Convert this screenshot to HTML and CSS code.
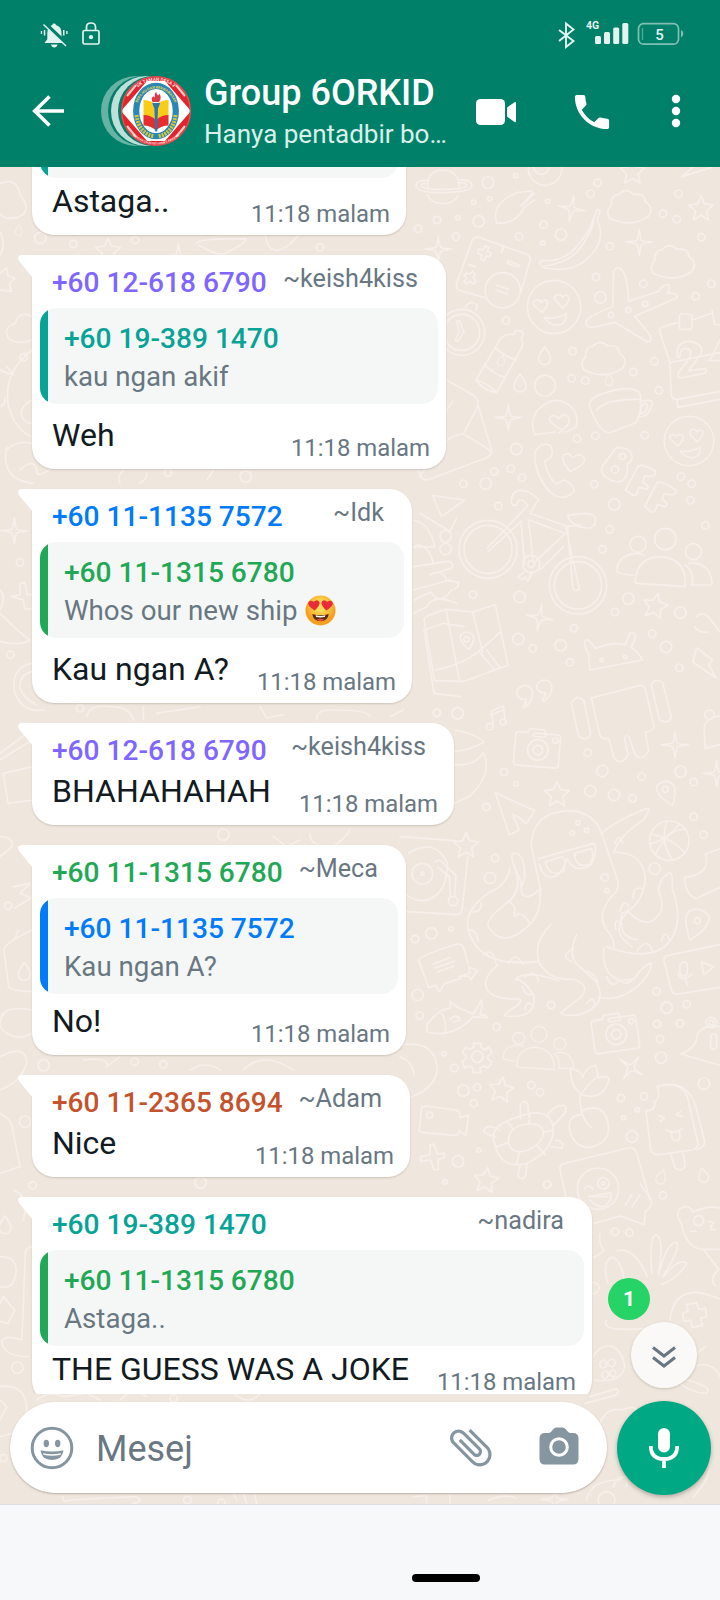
FILE: index.html
```html
<!DOCTYPE html>
<html lang="ms">
<head>
<meta charset="utf-8">
<title>Group 6ORKID</title>
<link rel="stylesheet" href="styles.css">
</head>
<body>
<div class="screen">
  <header class="header">
    <div class="status">
      <svg class="status-left" viewBox="36 16 70 34" width="70" height="34">
        <g fill="#e4f3f0">
          <path d="M54 23.500q1.500 0 2 1.400q5.500 1.700 5.500 8v6.500l2.500 3.500H44.500l2.800-3.700v-6.300q0-6.300 5-8q.4-1.400 1.700-1.400z"/>
          <path d="M51 44.500h6.600q-.8 3-3.300 3t-3.300-3z"/>
          <path d="M40.800 31h1.300v3h-1.300zM43.800 30h1.500v5.500h-1.500zM63 30h1.500v5.500H63zM66.200 31h1.400v3h-1.400z"/>
        </g>
        <path d="M44 22.500l24 23" stroke="#008069" stroke-width="4"/>
        <path d="M43.500 24.500l22.500 21.500" stroke="#e4f3f0" stroke-width="1.500"/>
        <g fill="none" stroke="#e4f3f0" stroke-width="1.700"><rect x="83" y="30.500" width="16" height="13.500" rx="1.500"/><path d="M86.500 30v-3q0-4 4.500-4t4.500 4v3"/></g>
        <circle cx="91" cy="37.200" r="2.100" fill="#e4f3f0"/>
      </svg>
      <svg class="status-right" viewBox="554 16 134 34" width="134" height="34">
        <path d="M559 30l14.500 11l-7.500 6V23.500l7.500 6L559 41" fill="none" stroke="#e4f3f0" stroke-width="1.900"/>
        <text x="586" y="29" class="net">4G</text>
        <g fill="#e4f3f0"><rect x="595" y="36" width="6" height="8" rx="1.500"/><rect x="604" y="32" width="6" height="12" rx="1.500"/><rect x="613.200" y="27.500" width="6" height="16.500" rx="1.500"/><rect x="622.300" y="23" width="6" height="21" rx="1.500"/></g>
        <rect x="638.500" y="23.700" width="40" height="20.500" rx="5" fill="none" stroke="#80c0b4" stroke-width="1.700"/>
        <path d="M642.500 28v12" stroke="#55a895" stroke-width="1.300"/>
        <path d="M681 30q2.300 1 2.300 3.600T681 37.400z" fill="#80c0b4"/>
        <text x="655.300" y="40.300" class="bat">5</text>
      </svg>
    </div>
    <div class="bar">
      <svg class="back" viewBox="30 90 38 42" width="38" height="42"><path d="M64 111H35M49.500 96.500L34.700 111l14.800 14.500" fill="none" stroke="#fff" stroke-width="3.600"/></svg>
      <svg class="avatar" viewBox="99 74 94 74" width="94" height="74">
        <defs>
          <clipPath id="face"><circle cx="156" cy="111" r="35"/></clipPath>
          <path id="arc-top" d="M126 111a30 30 0 0 1 60 0"/>
          <path id="arc-bot" d="M122.500 111a33.500 33.500 0 0 0 67 0"/>
          <path id="arc-in" d="M135.700 113a20.300 24.500 0 0 1 40.600 0"/>
        </defs>
        <circle cx="136" cy="111" r="35" fill="#66b3a5"/><circle cx="143" cy="111" r="35" fill="#008069"/>
        <circle cx="146" cy="111" r="35" fill="#bfdfda"/><circle cx="153" cy="111" r="35" fill="#008069"/>
        <g clip-path="url(#face)">
          <circle cx="156" cy="111" r="35" fill="#e4242c"/>
          <path d="M121 111l14-16l12-14h18l12 14l14 16l-14 16l-12 14h-18l-12-14z" fill="#fff"/>
          <path d="M127 96l9-11M185 96l-9-11M127 126l9 11M185 126l-9 11" stroke="#f4c9c6" stroke-width="2.200"/>
        </g>
        <circle cx="156" cy="111" r="34.300" fill="none" stroke="#e05052" stroke-width="1.400"/>
        <ellipse cx="156" cy="111" rx="19.800" ry="25.200" fill="#fff" stroke="#2a87b3" stroke-width="6.200"/>
        <path d="M136.500 115q2 18 17.500 21.500M175.500 115q-2 18-17.500 21.500" fill="none" stroke="#d4c63d" stroke-width="4" stroke-dasharray="2 1"/>
        <path d="M143.500 100q7 0 12.500 5q5.500-5 12.500-5v16q-7 0-12.500 5q-5.500-5-12.500-5z" fill="#f8cc17"/>
        <path d="M143.500 115q7 0 12.500 5q5.500-5 12.500-5V125.500q-7 0-12.500 5q-5.500-5-12.500-5z" fill="#e52e2d"/>
        <path d="M152.200 103h8l-2.200 5.500l-.8 23h-2l-.8-23z" fill="#2878b8"/>
        <path d="M152.500 102q-2-4 1-6q.2 2 1.200 1q-.5-3 1.500-5.500q0 3 2.200 4l1-2q2.700 4.500-.4 8.500z" fill="#e0394c"/>
        <text class="seal"><textPath href="#arc-top" startOffset="50%" text-anchor="middle">SK TAMAN DESA 2</textPath></text>
        <text class="seal-sm"><textPath href="#arc-bot" startOffset="50%" text-anchor="middle">BANDAR COUNTRY HOMES RAWANG</textPath></text>
        <text class="seal-in"><textPath href="#arc-in" startOffset="50%" text-anchor="middle">BERILMU DAN BERWAWASAN</textPath></text>
      </svg>
      <div class="titles">
        <div class="title">Group 6ORKID</div>
        <div class="sub">Hanya pentadbir bo…</div>
      </div>
      <svg class="actions" viewBox="470 86 220 50" width="220" height="50">
        <g fill="#fff"><rect x="476" y="99" width="29" height="26" rx="4.500"/><path d="M507 107.500l7.500-5.200q1.500-.8 1.500.8v18q0 1.600-1.500.8l-7.500-5.400z"/>
        <path transform="translate(569.200 89.200) scale(1.900)" d="M6.620 10.790c1.440 2.830 3.760 5.140 6.590 6.590l2.200-2.200c.27-.27.67-.36 1.020-.24 1.120.37 2.330.57 3.570.57.550 0 1 .45 1 1V20c0 .55-.45 1-1 1-9.390 0-17-7.610-17-17 0-.55.450-1 1-1h3.500c.55 0 1 .45 1 1 0 1.250.2 2.450.57 3.570.110.350.030.740-.25 1.020l-2.200 2.200z"/>
        <circle cx="676" cy="99" r="4.200"/><circle cx="676" cy="111" r="4.200"/><circle cx="676" cy="123" r="4.200"/></g>
      </svg>
    </div>
  </header>

  <main class="main">
    <svg class="wallpaper" viewBox="0 167 720 1337" width="720" height="1337">
      <defs>
        <circle id="s" r="6.500"/><circle id="m" r="11"/><circle id="l" r="17"/>
        <path id="star" d="M0-38l10 24l27 4l-20 18l6 27l-23-14l-23 14l6-27l-20-18l27-4z"/>
        <path id="spark" d="M0-38q4 32 8 34q4 3 32 4q-30 4-33 8q-3 3-7 32q-4-30-8-33q-3-4-32-7q28-2 33-5q3-3 7-33z"/>
        <path id="cloud" d="M-60 30q-14-22 5-40q-4-28 22-32q22-22 44 0q34-5 36 22q28 20 8 45q-50 35-115 5z"/>
        <g id="cam"><path d="M-70-35q0-10 10-10h25l5-12h45l5 12h35q10 0 10 10V45q0 10-10 10H-60q-10 0-10-10z"/><circle cy="5" r="31"/><circle cy="5" r="14"/><rect x="-18" y="-45" width="38" height="10" rx="5"/><circle cx="50" cy="-28" r="8"/></g>
        <g id="love"><circle r="80"/><path d="M-50 4q-22-18-4-24q10-4 15 6q8-12 18-4q8 10-14 34zM12-12q-20-20 0-25q10-2 14 8q8-10 18-2q6 12-18 34zM-28 32q35 6 64-12q4 30-24 34q-26 2-40-22z"/></g>
        <g id="people"><circle cy="-58" r="32"/><circle cx="-82" cy="-42" r="24"/><circle cx="84" cy="-20" r="24"/><path d="M-90 65Q-84-5-10-5q76 10 70 90l-145-10q-8-2-5-10zM-95 50q-35 0-50-10q-2-50 60-55q10 2 20 6M70 15q60-6 70 55q2 10-10 10h-50q8-40-20-60"/></g>
        <path id="drop" d="M0-28q20 28 18 38q-4 16-18 16t-18-16q-2-10 18-38z"/>
      </defs>
      <g class="doodle">
        <!-- right column, upper half -->
        <g transform="translate(400 160) scale(.33333)">
          <path d="M84 90q-8-58 46-60q48 2 48 56M82 105q10 26 50 26q35-4 42-24"/><path d="M84 62q-34-4-36 14q4 24 84 22q84-2 84-22q-4-18-38-16M84 72q-22-4-20 6q10 12 70 10q66 0 66-12q-4-12-24-6"/>
          <circle cx="435" cy="26" r="50"/><circle cx="424" cy="20" r="23"/><use href="#star" x="697" y="34"/><use href="#star" x="903" y="145"/>
          <path d="M845 50l55-46M845 50l90-28M290 190q-18-60 60-92l40-5q18 0-12 28l26-20M388 115l-24 22M404 120l-32 22q-22 50-82 48"/>
          <use href="#spark" x="515" y="145" transform="rotate(10 515 145)"/><use href="#spark" x="718" y="246"/><use href="#spark" x="115" y="267"/><use href="#spark" x="325" y="772"/><use href="#spark" x="419" y="1372" transform="rotate(10 419 1372)"/>
          <use href="#cloud" x="689" y="145"/><use href="#cloud" x="820" y="310"/><use href="#cloud" x="612" y="600"/>
          <path d="M580 178l12-30l8 2l-8 30q26 52-16 102q-50 60-140 42q-30-14-8-22q62 4 100-40q38-42 52-84M432 318q70-8 104-48q40-54 46-90"/>
          <path d="M216 242q6-14 20-10l142 50q16 6 12 20l-28 96M216 242l-46 128q-4 18 12 22l75 22M312 260l-8 18"/><path d="M236 266l12 4l8-12l10 4l-4 12l12 6l-4 10l-12-2l-6 14l-10-4l4-12l-12-6zM200 340l10 2l8-8l8 8l-6 10l8 14l-8 6l-10-8l-10 8l-8-8l8-10l-8-8zM324 302l32 12q4 6-4 6l-30-10zM206 314l20 6"/><circle cx="308" cy="391" r="53"/><path d="M290 376l35 12M288 390l35 12"/>
          <use href="#love" x="462" y="441"/><use href="#love" x="867" y="843" transform="translate(867 843) scale(.93) translate(-867 -843)"/>
          <path d="M638 440l2-80q-2-42 18-36q24 10 28 100l90-30q10-20 30-20q6 14-4 26q36-2 28 14l-126 55l46 56q8 30-16 16l-90-54l-60 14q-30 4-26-18q14-18 80-43z"/><circle cx="685" cy="450" r="8"/><circle cx="633" cy="465" r="8"/><circle cx="736" cy="432" r="8"/>
          <circle cx="185" cy="517" r="69"/><circle cx="185" cy="517" r="54"/><path d="M170 484l8-2l14 34l-18 28l-8-4l12-24zM196 442q14-24 34-8q4 8-2 16"/>
          <path d="M228 660l72-122q16-18 40-14l8-12q20-2 22 10l-6 14q10 20-4 36l-70 126q-40-6-62-38zM286 564q34 28 62 36M256 616q30 30 60 36M228 660q30 6 62 38"/><use href="#drop" x="434" y="588"/><use href="#drop" x="360" y="670"/><use href="#drop" transform="translate(627 660) scale(.65)"/><use href="#drop" transform="translate(304 602) rotate(20) scale(.6)"/>
          <path d="M778 510q-2-10 58-22M876 480l60-20M778 510l32 98l4 98q2 14 20 12l126-24M810 608l150-30M830 720l4 22l126-24"/><rect x="838" y="462" width="38" height="46" rx="8"/><path d="M936 452l8 42h16M832 590q-6-46 38-46q54 10 24 50l-28 38l50-6q6 8-2 14l-76 14q-8-10 0-20q36-42 34-56q-2-14-18-12q-14 4-14 22q-4 6-8 2zM930 600l30-60M926 602l34 0"/>
          <circle cx="435" cy="677" r="31"/><path d="M404 824q-18-54 20-84q42-36 84-4q32 26 20 66l-30 14q-62-30-46-46q14-10 24 6q14-20 28-6q14 20-26 48M404 824l62-8M568 738q0-28 50-40q72-24 100 0q16 40-10 90l-80 30q-30 0-60-80zM588 750q30-34 132-32M720 726q50-18 32 20q-10 24-36 26M720 742q24-22 22 0q-8 20-20 18"/>
          <path d="M140 660l80 46q16 10 14 30l40 130q4 20-16 28l-170 64q-18 6-24-8l-30-60M60 950q70-130 130-128q70 40 84 54M190 822l44-84M134 760l24-36"/>
          <path d="M404 880q12-32 42-26q18 14 6 38l-18 12q6 40 34 68l24-12q30 12 30 34q-32 34-70 4q-48-50-48-118zM510 934q-30-36-18-50q18-8 26 10q20-18 34-2q10 20-42 42zM606 920l44-58q44 0 46 28q0 18-14 20q6 50-28 56q-38-6-50-32zM676 990l38-70q8-12 52 14q6 20-32 14l-6 20q22 8 14 20l-26-6q-6 30-16 24zM734 1040l36-70q10-12 58 20q4 20-36 12l-6 18q22 8 10 20l-24-6q-8 30-20 20z"/><circle cx="645" cy="929" r="11"/><circle cx="667" cy="889" r="9"/>
          <path d="M98 1006l96 14l-70 50zM40 1080q50 10 64 80l-64 2"/>
          <circle cx="264" cy="1168" r="87"/><circle cx="264" cy="1168" r="72"/><circle cx="534" cy="1276" r="86"/><circle cx="534" cy="1276" r="71"/><path d="M262 1164l122-128q-28-32-34 0q-24 4-12-34q30-28 78 16l-26 42l116 40l34-6l-38 4l16 182q6 20 20 6l-42-190M506 1066q76-14 80 10q4 24-20 28q-50-2-64-38M386 1080l110 40l-96 90zM364 1094l10 120M490 1160l-70 70M264 1174l100-90"/><circle cx="394" cy="1212" r="26"/><circle cx="394" cy="1212" r="10"/><path d="M372 1236l-18 14q8 16 22 2l8 12l12-30"/>
          <use href="#people" x="796" y="1195"/>
          <path d="M40 1220l106-16q18 8 10 20l-66 20q40-20 50 18l34 4q6 20-20 24q-34 50-62 6l-50 24"/>
          <path d="M72 1378q0-10 66-30l80 8l68-22l38 182l-132 48l-88-2zM138 1348l40 212M218 1356l30 120M106 1530q90-18 140-64l54-48M260 1470l40 54M240 1478l44 52"/><path d="M206 1468q-30-24-24-42q18-20 38 0q4 22-14 42z"/><circle cx="200" cy="1438" r="8"/>
          <use href="#star" x="766" y="1337" transform="rotate(12 766 1337)"/>
          <path d="M570 1530l-4-48q-20-34-8-42q10-4 28 26q50-22 90-12l14-36q20-4 14 20l-10 24q26 20 34 38zM890 1370q20-20 40 6l30 40M884 1400q10 20 40 16M890 1464l48 36l-12 14l22 40l-70-48z"/><circle cx="605" cy="1500" r="5"/><circle cx="675" cy="1490" r="5"/>
          <use href="#m" x="168" y="230"/><use href="#l" x="236" y="184"/><use href="#l" x="264" y="68"/><use href="#m" x="111" y="180"/><use href="#s" x="269" y="116"/><use href="#s" x="221" y="127"/><use href="#s" x="173" y="173"/><use href="#m" x="54" y="206"/><use href="#m" x="431" y="194"/><use href="#l" x="483" y="224"/><use href="#m" x="357" y="230"/><use href="#s" x="428" y="249"/><use href="#s" x="443" y="124"/><use href="#m" x="593" y="68"/><use href="#m" x="572" y="101"/><use href="#s" x="347" y="47"/><use href="#m" x="836" y="101"/><use href="#m" x="789" y="161"/><use href="#m" x="830" y="178"/><use href="#m" x="904" y="232"/><use href="#m" x="630" y="259"/><use href="#m" x="588" y="351"/><use href="#l" x="601" y="412"/><use href="#m" x="730" y="371"/><use href="#m" x="887" y="409"/><use href="#m" x="934" y="371"/><use href="#m" x="318" y="482"/><use href="#m" x="518" y="573"/><use href="#m" x="556" y="662"/><use href="#m" x="515" y="655"/><use href="#m" x="700" y="636"/><use href="#m" x="763" y="604"/><use href="#m" x="777" y="691"/><use href="#l" x="349" y="867"/><use href="#m" x="531" y="836"/><use href="#m" x="586" y="827"/><use href="#m" x="734" y="826"/><use href="#m" x="283" y="935"/><use href="#m" x="332" y="926"/><use href="#l" x="257" y="971"/><use href="#m" x="190" y="971"/><use href="#m" x="366" y="953"/><use href="#m" x="583" y="973"/><use href="#l" x="643" y="1033"/><use href="#m" x="871" y="1021"/><use href="#m" x="875" y="971"/><use href="#m" x="843" y="950"/><use href="#m" x="295" y="1038"/><use href="#l" x="137" y="1129"/><use href="#m" x="629" y="1108"/><use href="#m" x="607" y="1168"/><use href="#m" x="916" y="1096"/><use href="#m" x="219" y="1304"/><use href="#l" x="359" y="1311"/><use href="#l" x="685" y="1316"/><use href="#m" x="645" y="1356"/><use href="#l" x="841" y="1358"/><use href="#m" x="522" y="1405"/><use href="#l" x="355" y="1437"/><use href="#l" x="482" y="1456"/><use href="#m" x="757" y="1421"/><use href="#l" x="798" y="1461"/><use href="#m" x="838" y="1523"/><use href="#m" x="510" y="1507"/><use href="#m" x="398" y="1465"/>
        </g>
        <!-- right column, lower half -->
        <g transform="translate(400 680) scale(.33333)">
          <path d="M372 84q24-16 26-44q-2-24-26-24q-22 6-22 24q4 20 28 18q2 12-10 20zM430 64q26-16 26-44q-4-20-26-20q-20 6-20 22q4 18 26 16q2 12-10 20z"/>
          <path d="M280 134l-6-40l36-16l6 46M272 104l38-14"/><circle cx="269" cy="140" r="10"/><circle cx="309" cy="126" r="9"/><use href="#cam" x="414" y="205" transform="rotate(5 414 205)"/><use href="#cam" x="648" y="1058" transform="rotate(-8 648 1058)"/>
          <path d="M574 54l146-38q14 0 16 12l26 110q-2 14-26 20l10 54q-20 36-42 10l-16-50q-12-12-14 6l10 46q-20 36-42 10l-16-60q-20 6-26-8zM514 70q16-30 38-8l20 100q-12 26-36 6zM754 14q10-22 34-6l26 104q-10 24-36 6z"/>
          <use href="#spark" x="825" y="194"/><use href="#spark" x="950" y="280"/><use href="#spark" x="694" y="1162" transform="rotate(35 694 1162)"/><path d="M916 206l-4-60q4-34 48-38M916 206l44-12"/><circle cx="928" cy="104" r="14"/>
          <path d="M164 150q62 10 88 36q-40 24-88 28M162 254q62 6 88-36q30 60-40 130l-48 22M286 338l118 54l-26 40q-16-20-40-30l20 48l-30 14z"/>
          <use href="#star" x="471" y="342"/><use href="#star" x="198" y="496"/><use href="#star" x="304" y="1228" transform="rotate(8 304 1228)"/><use href="#star" x="258" y="1500" transform="rotate(8 258 1500)"/>
          <path d="M422 630L394 500q0-106 118-108q74 6 94 72l48 140q4 30-20 46q-50 60-6 110q14 20 14 40M416 536l164-46q12 0 2 46q-8 34-54 28q-24-14-26-28q-16 40-30 50q-40 20-54-34M436 546l50-16q14 6 6 44q-44 20-56-28zM524 520l50-14q10 20-4 46q-44 16-46-32z"/>
          <path d="M418 630q-60 50-54-24q-40-80-24-86q32-4 34 60q0 30-12 40M346 570q20 50-14 90q-80 60-66 82q40 60 104 8q58-40 50-120M330 566q-10 50-60 70q-90 60-60 130q40 100 206 78M604 462q40-40 140-78q10 0-12 34q-76 50-90 98q90 0 94 84q-10 80-70 100q-10 30 6 60q20 20 40 18M684 694q60 60 92 10q20-20 0-70q0-40 34-56q10 4 6 46q34 90 0 150q-50 80-196 26M684 694q-60 60 12 106"/>
          <path d="M454 732q-60 60-34 120q30 50 100 46q50 16 26 50q-30 26-64 50q10 12 56 6q90-30 50-100l-56-50q-30-30-2-90M294 854q-70 60-10 94q50 14 74 8q10 10-14 26q-40 24-26 26q90 10 84-60q-30-50-56-50q30-30 130 4M612 802q-10 80 50 100l40-4q20-36 52-50q0 28-30 60q-60 60-128 44"/>
          <path d="M218 696q26 2 26-28M206 748q26 2 28 34M250 824q30-24 38 26M326 850q20-40 44 4M322 664q30 10 20 40M344 710q20-24 44 18M644 490q16-36 24 0M700 656q-4-40 30-30M660 694q10-40 26-16M648 750q-10-40 18-20M712 812q30-44 46 2M784 782q14-40 24 0M516 846q-40-20 4-40M554 876q20-10 40 30M376 890q30-24 40 14M368 920q10 34 30 20M376 990q0-30 20-16M560 970q20-24 24 0M620 890q16 40 38 10q20 20 40-2"/>
          <circle cx="808" cy="482" r="59"/><path d="M752 462q60 10 100 54M766 524q40-80 90-76M800 424q-20 70 18 116M750 492q50-10 86-58"/>
          <path d="M0 470l166 12M204 530l-18 160q-4 14-14 14l-156-10M26 520q80-50 116 30q0 100-70 112q-30 0-52-16"/><circle cx="67" cy="581" r="31"/><circle cx="67" cy="581" r="5"/><path d="M106 546q16-12 26 6l36 34l-4 60M114 562l34 28l4 62"/><circle cx="159" cy="663" r="14"/>
          <path d="M56 842q-2-14 116-50q18-4 24 30l8 30M56 842l30 80l22-6l10 20l16-26l48-14M100 852l52-20M106 864l58-20M112 876l50-18M176 890l34-12l-4-18l26 12l-20 28l-6-12z"/>
          <path d="M80 1034q40-50 72-50l-2-20l22 18l48 20l24-42q6 10-4 44q20 0 22 10l-42-4q-60 66-140 46q4-4 0-22zM126 1002q14 20 10 58M150 1018q20-20 30 2l-20 6"/>
          <use href="#people" transform="translate(417 1106) scale(.74)"/><circle cx="232" cy="1130" r="17"/><path d="M222 1102l-2-12h24l-2 12l14 8l10-10l10 18l-12 10v10l12 8l-12 18l-12-6l-12 6l2 14h-22l-2-14l-12-6l-12 6l-8-20l12-8v-10l-12-8l10-16l12 6z"/>
          <path d="M0 1096q100-20 112 66q0 60-80 90M0 1130q40 16 42 54"/>
          <path d="M58 1352l6-64q2-10 14-10l90 12q14 4 12 22l26-6l-8 60l-20-14q-4 16-16 14l-92-8q-12-2-12-6z"/><circle cx="89" cy="1305" r="9"/>
          <path d="M90 1394l12-2l10 30l22-2l-2 14l-18 4l2 30l-14 2l-10-30l-30 4v-14l28-6z"/>
          <path d="M284 1390q-20-50 56-74q110-46 120 30q0 66-80 104q-80 20-96-60zM326 1386q-4-46 58-54q54-4 44 40q-24 40-70 44q-30-4-32-30zM362 1316l-2-40q16-22 24 0l2 34M440 1310q16-34 50-34q20 8-10 40l-20 20M466 1380q30 4 20 24l-34-4M360 1454l-6 36q20 14 24-10l2-26M286 1370q-40-10-34-20q10-20 46 0M320 1322l20 26M390 1304l-4 28M460 1350l-32 8M436 1424l-26-28M350 1450l8-34M290 1400l36-12"/>
          <path d="M576 1344q-38-26-36-104q-30-24-28-76q34 10 36 28q6-26 38-38q10 26 6 40q40-10 34 10q-20 60-82 40M546 1304q-40 0-38 40q10 60 64 58q54-12 54-60q-10-80-80-50M546 1240q20-30 40-44"/>
          <path d="M772 1220q70-20 90 30l32 140q0 16-16 20l-100 14q-20 2-26-16l-14-116q30 0 26-28q20-10 8-44zM790 1214q70-10 96 60l28 110q0 20-24 26M810 1420l16 44q20 14 30-6l-8-44M776 1306l18 8l-14 10M842 1294l-14 10l20 6M798 1350q30 14 50-6M814 1354q-2 30 18 28q14-8 4-32"/>
          <path d="M842 1122q50-20 50-60q20-30 68-22M842 1122l118 34"/><circle cx="934" cy="1028" r="16"/><circle cx="934" cy="1028" r="7"/><rect x="932" y="1062" width="18" height="46" rx="9"/>
          <path d="M960 794l-156 32q-14 4-12 16l22 88q4 14 20 12l126-20M904 846l38 14l-30 24zM834 878q10 34 42 4M856 892l6 24"/><rect x="840" y="846" width="22" height="42" rx="11"/>
          <path d="M960 506l-44 16q20 60-62 70q0 50 34 64l72-34"/><path d="M870 780q-24-70 0-88q30-14 56 14q8 34-56 74z"/><circle cx="892" cy="722" r="9"/><path d="M818 376q-58-34-46-60q28-24 50 0q8 20-4 60z"/><circle cx="796" cy="328" r="9"/>
          <path d="M480 1470q-4-16 14-20l190-46q18-4 26 14l40 142M480 1470l20 90"/><circle cx="594" cy="1526" r="62"/><circle cx="610" cy="1510" r="17"/><circle cx="610" cy="1510" r="5"/><path d="M554 1526q10-16 24 0M566 1550l66-12v22"/>
          <use href="#drop" transform="translate(784 1492) rotate(20) scale(.8)"/><use href="#drop" transform="translate(910 1486) rotate(-15) scale(.8)"/>
          <use href="#m" x="111" y="99"/><use href="#l" x="173" y="100"/><use href="#m" x="563" y="218"/><use href="#l" x="607" y="273"/><use href="#m" x="312" y="276"/><use href="#s" x="348" y="311"/><use href="#l" x="571" y="333"/><use href="#l" x="642" y="345"/><use href="#m" x="698" y="355"/><use href="#m" x="725" y="290"/><use href="#l" x="842" y="275"/><use href="#m" x="881" y="306"/><use href="#m" x="259" y="381"/><use href="#m" x="285" y="534"/><use href="#l" x="270" y="594"/><use href="#l" x="764" y="566"/><use href="#m" x="911" y="464"/><use href="#m" x="881" y="410"/><use href="#s" x="534" y="428"/><use href="#s" x="560" y="451"/><use href="#s" x="517" y="459"/><use href="#m" x="614" y="593"/><use href="#s" x="621" y="632"/><use href="#l" x="94" y="760"/><use href="#s" x="153" y="746"/><use href="#m" x="45" y="777"/><use href="#l" x="53" y="945"/><use href="#m" x="59" y="1007"/><use href="#m" x="290" y="1041"/><use href="#m" x="453" y="975"/><use href="#m" x="770" y="934"/><use href="#l" x="800" y="983"/><use href="#m" x="860" y="973"/><use href="#m" x="771" y="1032"/><use href="#m" x="840" y="1030"/><use href="#m" x="780" y="1077"/><use href="#l" x="783" y="1133"/><use href="#s" x="132" y="1121"/><use href="#m" x="163" y="1164"/><use href="#l" x="190" y="1232"/><use href="#m" x="231" y="1222"/><use href="#m" x="221" y="1270"/><use href="#m" x="394" y="1216"/><use href="#m" x="420" y="1237"/><use href="#m" x="663" y="1254"/><use href="#m" x="732" y="1249"/><use href="#l" x="696" y="1370"/><use href="#s" x="671" y="1313"/><use href="#l" x="912" y="1211"/><use href="#l" x="174" y="1444"/><use href="#s" x="236" y="1411"/><use href="#m" x="441" y="1514"/><use href="#s" x="135" y="1506"/><use href="#s" x="712" y="1290"/>
        </g>
        <!-- around the composer, right -->
        <g transform="translate(360 1180) scale(.33333)">
          <path d="M840 10l34 50q4 20-18 34l-4 40l-70-26l-80 22M796 76l20-34M816 80l24-36M690 60q40 40 60 0M700 50h44"/><path d="M964 130q-26-40 10-50q20 0 26 16q50-24 90-8M964 130q16 80 70 78h50M1030 208l46 60q-30 30-10 50"/><circle cx="1016" cy="122" r="15"/><path d="M1046 124l16 2l-10 12M1056 138l-4 12l14-2M990 154h18"/>
          <path d="M744 310q-20-60 10-78q26 0 40 70M772 212q50-14 90 78M876 280q-10-100 10-116q28 0 10 120M900 270q20-80 50-84q12 20-40 100M910 290q50-60 70-40q-20 40-76 64M740 420q-10 20 20 26q50 4 90 0M720 160q-4 40 14 52q-30 20-34 20"/>
          <path d="M930 420q10-90 90-82q40 10 60 20M968 400l16-6l-4-20l30-6l6 20l20-4l4 26l-18 4l4 22l-30 6l-4-22l-20 4z"/>
          <path d="M700 530q20-40 60-30q30 20 34 60q-10 50-90 40M720 550q10-20 20 0q0 20-20 10zM744 544q16-16 22 4q-4 20-22 6zM726 580q16-16 20 4q-8 18-20 6zM750 574q14-10 18 6q-4 16-18 6zM690 650l80-24q10 12-4 20l-90 24M720 730q20-50 66-40q40-20 50 10M980 600q80 20 60 40q-60 0-110-60M1000 560q60-20 80 30M1010 520l26-20"/>
          <path d="M760 920q10-30 40-30v30M680 960q10-60 100-60M1000 950q60-60 50-130"/><circle cx="740" cy="960" r="25"/><use href="#m" x="765" y="155"/><use href="#m" x="808" y="158"/><use href="#m" x="562" y="14"/><use href="#m" x="909" y="46"/><use href="#l" x="700" y="324"/><path d="M160 950l40-4v22M386 960q50-20 80-6M270 945v25"/><use href="#spark" x="584" y="958"/>
        </g>
        <!-- left edge -->
        <g transform="translate(0 160) scale(.33333)">
          <path d="M0 70q50-20 60 34q40 50-6 68q-40 10-54-10M0 215q20 40 0 70M590 250q0-14 146-14q14 6-60 44q-20 10-80-24M796 226q10 70 70 30l30-30M0 340l20-16l4 24l20 6l-16 18l6 22l-34-4"/><use href="#star" x="324" y="272"/><use href="#drop" transform="translate(56 212) scale(.6)"/><use href="#l" x="121" y="234"/><use href="#m" x="220" y="252"/><use href="#m" x="405" y="240"/><use href="#spark" x="535" y="288"/><use href="#m" x="960" y="262"/>
          <path d="M96 470q-40-20-50 20q-40 14-20 46q30 20 70 4M0 630q20 10 40 14l-20-24M0 740q20-10 14-26M96 570q-90 70-70 170q20 70 70 90M96 720q-40 20-30 50q10 20 30 20M20 860q-20 100 80 110M96 850q-50-10-76 20M60 930q40-40 50 0q0 30 50-10"/><use href="#m" x="71" y="592"/>
          <path d="M370 930q-20 20-10 40M440 940q0 20-20 30M640 930q-10 20-20 30"/><use href="#l" x="737" y="950"/><use href="#m" x="504" y="938"/>
        </g>
        <g transform="translate(0 480) scale(.33333)">
          <use href="#spark" x="43" y="152"/><use href="#m" x="60" y="247"/><path d="M0 400q60 60 90 80q-30 20-90 4M34 350l26-6v-34l14-2l8 36h14M34 350l36 10l4 26l22 2M0 330q20 20 0 60M96 550q-60 10-54 80q20 70 90 60M96 575q-40 10-36 50q10 30 50 50M0 820l80-60M0 840l96-60M10 880l86-20M10 880l14 90l76-10"/><use href="#m" x="31" y="524"/><use href="#m" x="240" y="685"/><path d="M260 710q10-40 70-30q60 0 70 40M430 680v40M470 700l130-20M780 680l20 34l50-10"/>
          <path d="M1260 100l90 54l20-40M1240 200q40-20 60 50M1240 330l110-30M1240 400l40-20q20-40 90-10M1272 450l60-20l60 10M1272 450l30 190l80 10"/><use href="#l" x="1337" y="207"/><use href="#m" x="1310" y="698"/><path d="M950 720q0-30 40-30q120 0 120 20M1170 710l40-20"/>
        </g>
        <g transform="translate(0 830) scale(.33333)">
          <path d="M0 20q40 0 36 30l-36 30M40 170l50-10l-30 30l34 14l-50 30M12 360q0-20 84-60M12 360l14 110q10 14 70 14M56 300l-14 30M96 540q-100-20-96 50q40 50 96 20M0 680q80-40 80 20q-20 60-80 80M0 850q40 20 40 60l20 100l-60 20"/><use href="#drop" x="73" y="425"/><use href="#m" x="24" y="227"/><use href="#l" x="75" y="875"/><use href="#m" x="404" y="695"/><use href="#m" x="490" y="703"/><use href="#l" x="131" y="706"/><use href="#l" x="670" y="14"/><path d="M250 690q80-10 70 20l40-30M570 720q50-30 90 0M730 720q60-60 150 0M930 10q0 40 60 44q40-20 60-54M820 20l40 30l40-20"/>
        </g>
        <g transform="translate(0 1180) scale(.33333)">
          <use href="#m" x="98" y="16"/><use href="#l" x="602" y="8"/><use href="#drop" x="15" y="135"/><path d="M40 30q50 20 30 90M0 230q60 0 46 60q-10 40-46 30M0 370l10-20l16 20l18 20l-20 40l-24-6M96 200q-20 4-20 20l-10 260q-60-20-60 10q10 40 80 40M0 620q80-10 80 70q-10 70-80 80M0 660l20 20l-20 40M110 660q40-30 80-10l70-10l40 20M360 660q40-40 80-10M700 640q50 40 80 0M188 950q0 20 20 10l200-10q30 14-10 20M710 960l-10-20M740 970l-10-30M770 970l-6-26"/><use href="#l" x="52" y="563"/><use href="#m" x="10" y="834"/><use href="#m" x="562" y="960"/><use href="#m" x="664" y="968"/><use href="#m" x="521" y="655"/>
        </g>
      </g>
    </svg>

    <div class="chat">
      <section class="bubble b-top">
        <div class="quote teal"></div>
        <div class="line"><span class="msg">Astaga..</span><span class="time">11:18 malam</span></div>
      </section>
      <section class="bubble b-keish">
        <i class="tail"></i>
        <div class="who"><b class="c-violet">+60 12-618 6790</b><span>~keish4kiss</span></div>
        <div class="quote teal"><b>+60 19-389 1470</b><p>kau ngan akif</p></div>
        <div class="line"><span class="msg">Weh</span><span class="time">11:18 malam</span></div>
      </section>
      <section class="bubble b-idk">
        <i class="tail"></i>
        <div class="who"><b class="c-blue">+60 11-1135 7572</b><span>~Idk</span></div>
        <div class="quote green"><b>+60 11-1315 6780</b><p>Whos our new ship <svg class="emoji" viewBox="0 0 32 32" width="31" height="31"><defs><radialGradient id="skin" cx=".5" cy=".35"><stop offset=".3" stop-color="#ffdd55"/><stop offset="1" stop-color="#f5a021"/></radialGradient></defs><circle cx="16" cy="16" r="15.500" fill="url(#skin)"/><path d="M10 16Q2 11 3.500 7.500Q5 4.500 9 7Q13 3.500 15 7.500Q15.500 11 10 16zM22 16Q16.500 11 17 7.500Q19 3.500 23 7Q27 4.500 28.500 7.500Q30 11 22 16z" fill="#e92b3b"/><path d="M7.500 19.500q8.500 3 17 0q-1 7.500-8.500 7.500t-8.500-7.500z" fill="#5c2e14"/><path d="M11 21q5 1.200 10 0l-.5 1.800q-4.500.8-9 0z" fill="#fff"/><path d="M12 25.500q4-2 8 0q-4 2.500-8 0z" fill="#e84c50"/></svg></p></div>
        <div class="line"><span class="msg">Kau ngan A?</span><span class="time">11:18 malam</span></div>
      </section>
      <section class="bubble b-haha">
        <i class="tail"></i>
        <div class="who"><b class="c-violet">+60 12-618 6790</b><span>~keish4kiss</span></div>
        <div class="line"><span class="msg">BHAHAHAHAH</span><span class="time">11:18 malam</span></div>
      </section>
      <section class="bubble b-meca">
        <i class="tail"></i>
        <div class="who"><b class="c-green">+60 11-1315 6780</b><span>~Meca</span></div>
        <div class="quote blue"><b>+60 11-1135 7572</b><p>Kau ngan A?</p></div>
        <div class="line"><span class="msg">No!</span><span class="time">11:18 malam</span></div>
      </section>
      <section class="bubble b-adam">
        <i class="tail"></i>
        <div class="who"><b class="c-rust">+60 11-2365 8694</b><span>~Adam</span></div>
        <div class="line"><span class="msg">Nice</span><span class="time">11:18 malam</span></div>
      </section>
      <section class="bubble b-nadira">
        <i class="tail"></i>
        <div class="who"><b class="c-teal">+60 19-389 1470</b><span>~nadira</span></div>
        <div class="quote green"><b>+60 11-1315 6780</b><p>Astaga..</p></div>
        <div class="line"><span class="msg">THE GUESS WAS A JOKE</span><span class="time">11:18 malam</span></div>
      </section>
    </div>

    <div class="unread">1</div>
    <div class="jump"><svg viewBox="0 0 26 24" width="26" height="24"><path d="M2 2.500l11 8.500l11-8.500M2 12.500l11 8.500l11-8.500" fill="none" stroke="#687782" stroke-width="3"/></svg></div>

    <div class="composer">
      <div class="field">
        <svg class="smile" viewBox="0 0 44 44" width="44" height="44"><circle cx="22" cy="22" r="19.800" fill="none" stroke="#8696a0" stroke-width="3"/><g fill="#8696a0"><ellipse cx="16.300" cy="17.500" rx="2.700" ry="3.700"/><ellipse cx="27.700" cy="17.500" rx="2.700" ry="3.700"/><path fill-rule="evenodd" d="M10.500 24.300q11.500 2.500 23 0q-1 9.700-11.500 9.700T10.500 24.300zM13 27.300q9 2 18 0l-.5 1.500q-8.500 2-17 0z"/></g></svg>
        <span class="hint">Mesej</span>
        <svg class="clip" viewBox="448 1426 46 44" width="46" height="44"><path transform="translate(458.600 1438) rotate(-45) scale(2.140) translate(-11 -5)" fill="#8696a0" d="M16.500 6v11.500c0 2.210-1.790 4-4 4s-4-1.790-4-4V5c0-1.380 1.120-2.500 2.500-2.500s2.500 1.120 2.500 2.500v10.500c0 .55-.45 1-1 1s-1-.45-1-1V6H10v9.500c0 1.380 1.120 2.500 2.500 2.500s2.500-1.120 2.500-2.500V5c0-2.210-1.790-4-4-4S7 2.790 7 5v12.500c0 3.040 2.460 5.500 5.500 5.500s5.500-2.460 5.500-5.500V6h-1.500z"/></svg>
        <svg class="camera" viewBox="0 0 40 38" width="40" height="38"><path d="M6 6h4q2.500-1 4-3.500Q15.500.5 17.500.5h6q2 0 3.500 2Q28.500 5 31 6h3q5.500 0 5.500 5.500v20.500q0 5.500-5.500 5.500H6Q.5 37.500.5 32V11.500Q.5 6 6 6z" fill="#8696a0"/><circle cx="20" cy="20" r="8.300" fill="none" stroke="#fff" stroke-width="3"/></svg>
      </div>
      <div class="mic"><svg viewBox="0 0 32 42" width="32" height="42"><rect x="10" y="1" width="12" height="24.500" rx="6" fill="#fff"/><path d="M2.800 19q0 13 13.200 13T29.200 19M16 32v9" fill="none" stroke="#fff" stroke-width="3.800"/></svg></div>
    </div>
  </main>
  <footer class="nav"><div class="pill"></div></footer>
</div>
</body>
</html>
```

FILE: styles.css
```css
* { box-sizing: border-box; }
body { margin: 0; font-family: Roboto, "Liberation Sans", sans-serif; }
p { margin: 0; }
svg { display: block; flex: none; }
.screen { width: 720px; height: 1600px; overflow: hidden; display: flex; flex-direction: column; }

.header { height: 167px; background: #008069; flex: none; }
.status { height: 66px; padding: 16px 32px 0 36px; display: flex; justify-content: space-between; }
.net { font: 700 10.500px Roboto, sans-serif; fill: #e4f3f0; }
.bat { font: 500 15px Roboto, sans-serif; fill: #e4f3f0; }
.bar { display: flex; padding-left: 30px; }
.back { margin-top: 24px; }
.avatar { margin: 8px 0 0 31px; }
.seal { font: 500 4.600px Roboto, sans-serif; fill: #fff; }
.seal-sm { font: 500 3px Roboto, sans-serif; fill: #fff; }
.seal-in { font: 700 3.600px Roboto, sans-serif; fill: #e3d84f; }
.titles { width: 253px; margin-left: 11px; padding-top: 5px; white-space: nowrap; }
.title { color: #fff; font-size: 36px; font-weight: 500; line-height: 44px; }
.sub { color: #d9f0eb; font-size: 26px; line-height: 32px; margin-top: 3px; }
.actions { margin: 20px 0 0 13px; }

.main { position: relative; height: 1337px; flex: none; background: #efe7de; overflow: hidden; }
.wallpaper { position: absolute; inset: 0; }
.doodle { fill: none; stroke: #f6efea; stroke-width: 5; stroke-linejoin: round; stroke-linecap: round; }

.chat { position: relative; height: 1227px; overflow: hidden; padding-left: 32px; display: flex; flex-direction: column; gap: 20px; }
.bubble { position: relative; flex: none; display: flex; flex-direction: column; background: #fff; border-radius: 22px; border-top-left-radius: 0; box-shadow: 0 1px 2px rgba(90, 70, 50, .22); }
.tail { position: absolute; left: -14px; top: 0; width: 15px; height: 23px; background: #fff; clip-path: path("M3 0H15V23L1 6Q-1.500 1 3 0Z"); }
.b-top { width: 374px; height: 124px; margin-top: -56px; }
.b-keish { width: 414px; height: 214px; }
.b-idk { width: 380px; height: 214px; }
.b-haha { width: 422px; height: 102px; }
.b-meca { width: 374px; height: 210px; }
.b-adam { width: 378px; height: 102px; }
.b-nadira { width: 560px; height: 206px; }
.b-top .quote { height: 67px; }

.who { display: flex; justify-content: space-between; align-items: flex-start; height: 45px; padding: 11px 28px 0 20px; flex: none; }
.who b { font-size: 28.100px; font-weight: 500; line-height: 34px; }
.who span { font-size: 25.200px; line-height: 28px; margin-top: -1px; color: #687782; }
.c-violet { color: #7f66ff; }
.c-blue { color: #007bfc; }
.c-green { color: #1fa855; }
.c-rust { color: #c4532d; }
.c-teal { color: #06a397; }

.quote { height: 96px; flex: none; margin: 0 8px; padding: 14px 0 0 24px; border-radius: 16px; color: #687782; }
.who + .quote { margin-top: 8px; }
.quote b { display: block; font-size: 28.100px; font-weight: 500; line-height: 34px; }
.quote p { display: flex; align-items: center; gap: 7px; font-size: 27.700px; line-height: 32px; margin-top: 5px; height: 32px; }
.emoji { margin-bottom: 2px; }
.teal { background: linear-gradient(90deg, #06a397 8px, #f5f7f6 8px); }
.green { background: linear-gradient(90deg, #1fa855 8px, #f5f7f6 8px); }
.blue { background: linear-gradient(90deg, #007bfc 8px, #f5f7f6 8px); }
.teal b { color: #06a397; }
.green b { color: #1fa855; }
.blue b { color: #007bfc; }

.line { height: 53px; flex: none; margin-top: auto; display: flex; justify-content: space-between; align-items: flex-end; padding: 0 16px 7px 20px; }
.b-nadira .line { height: 57px; margin-top: 0; }
.msg { font-size: 32px; line-height: 38px; margin-bottom: 8px; color: #111b21; }
.time { font-size: 23.900px; line-height: 28px; color: #687782; }

.unread { position: absolute; left: 608px; top: 1111px; width: 42px; height: 42px; border-radius: 50%; background: #25d366; color: #fff; font-size: 21px; font-weight: 700; line-height: 43px; text-align: center; }
.jump { position: absolute; left: 631px; top: 1155px; width: 66px; height: 66px; border-radius: 50%; background: rgba(251, 250, 249, .96); box-shadow: 0 1px 3px rgba(90, 70, 50, .25); display: flex; align-items: center; justify-content: center; padding-top: 4px; }

.composer { position: relative; height: 110px; display: flex; gap: 10px; padding: 7px 9px 0 10px; }
.field { width: 597px; height: 91px; margin-top: 1px; border-radius: 46px; background: #fff; box-shadow: 0 1px 2px rgba(90, 70, 50, .35); display: flex; align-items: center; padding-left: 20px; }
.hint { width: 330px; margin-left: 22px; font-size: 36px; line-height: 44px; padding-top: 2px; color: #687782; }
.clip { margin-left: 22px; }
.camera { margin: 0 0 4px 45px; }
.mic { width: 94px; height: 94px; border-radius: 50%; background: #00a884; box-shadow: 0 2px 4px rgba(60, 50, 40, .35); display: flex; align-items: center; justify-content: center; }

.nav { height: 96px; background: #f7f8fa; border-top: 1px solid #dcdfe3; padding: 69px 0 0 412px; }
.pill { width: 68px; height: 8px; border-radius: 4px; background: #000; }
```
